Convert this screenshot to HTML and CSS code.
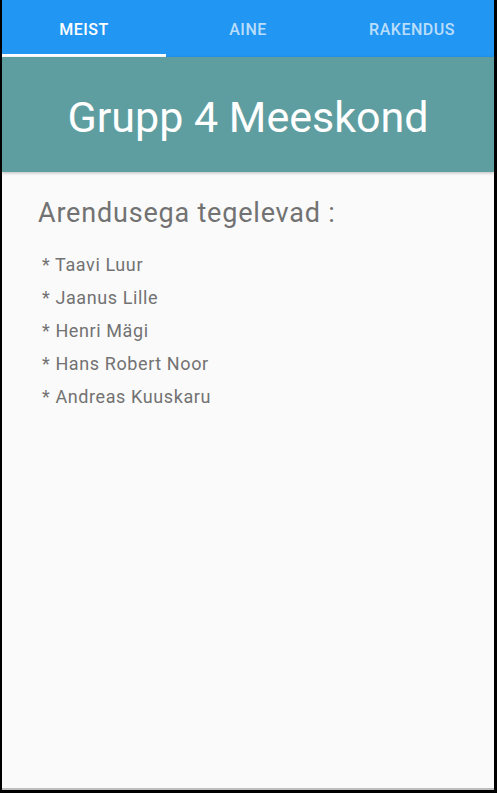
FILE: index.html
```html
<!DOCTYPE html>
<html lang="et">
<head>
<meta charset="utf-8">
<title>Grupp 4 Meeskond</title>
<link rel="stylesheet" href="styles.css">
</head>
<body>
<div class="app">
  <nav class="tabs">
    <div class="tab active">MEIST</div>
    <div class="tab">AINE</div>
    <div class="tab">RAKENDUS</div>
  </nav>
  <header class="banner">
    <h1 class="title">Grupp 4 Meeskond</h1>
  </header>
  <main class="content">
    <h2 class="heading">Arendusega tegelevad :</h2>
    <ul class="members">
      <li>* Taavi Luur</li>
      <li>* Jaanus Lille</li>
      <li>* Henri Mägi</li>
      <li>* Hans Robert Noor</li>
      <li>* Andreas Kuuskaru</li>
    </ul>
  </main>
</div>
</body>
</html>
```
FILE: styles.css
```css
html, body {
  margin: 0;
  padding: 0;
  background: #000;
  font-family: Roboto, "Noto Sans", sans-serif;
}
.app {
  margin: 0 3px 0 2px;
  height: 788px;
  background: #fafafa;
  border-bottom: 2px solid #bdbdbd;
  display: flex;
  flex-direction: column;
  overflow: hidden;
}
.tabs {
  display: flex;
  height: 57px;
  background: #2196f3;
}
.tab {
  flex: 1;
  display: flex;
  align-items: center;
  justify-content: center;
  font-size: 16px;
  font-weight: 500;
  letter-spacing: 0.5px;
  color: rgba(255, 255, 255, 0.7);
  box-sizing: border-box;
  padding-top: 4px;
  border-bottom: 3px solid transparent;
}
.tab.active {
  color: #fff;
  border-bottom-color: #fff;
}
.banner {
  height: 115px;
  box-sizing: border-box;
  padding-top: 5px;
  background: #5f9ea0;
  display: flex;
  align-items: center;
  justify-content: center;
  box-shadow: 0 1px 3px rgba(0, 0, 0, 0.25);
  position: relative;
}
.title {
  margin: 0;
  font-size: 43px;
  font-weight: 400;
  color: #fff;
}
.content {
  padding: 23px 0 0 36px;
}
.heading {
  margin: 0 0 17px 0;
  font-size: 27px;
  letter-spacing: 0.8px;
  font-weight: 400;
  color: #727272;
  line-height: 36px;
}
.members {
  list-style: none;
  margin: 0;
  padding: 0 0 0 4px;
}
.members li {
  font-size: 18px;
  letter-spacing: 0.6px;
  line-height: 33px;
  color: #727272;
}
```
